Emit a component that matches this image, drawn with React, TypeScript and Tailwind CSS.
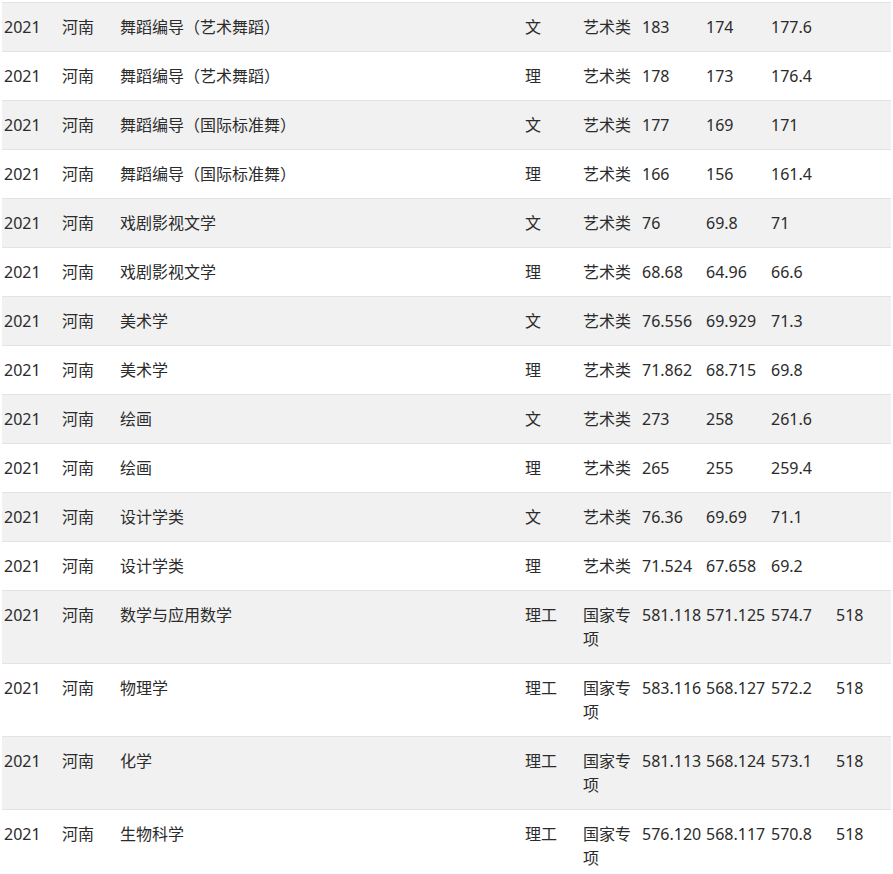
const rows: string[][] = [
  ['2021', '河南', '舞蹈编导（艺术舞蹈）', '文', '艺术类', '183', '174', '177.6', ''],
  ['2021', '河南', '舞蹈编导（艺术舞蹈）', '理', '艺术类', '178', '173', '176.4', ''],
  ['2021', '河南', '舞蹈编导（国际标准舞）', '文', '艺术类', '177', '169', '171', ''],
  ['2021', '河南', '舞蹈编导（国际标准舞）', '理', '艺术类', '166', '156', '161.4', ''],
  ['2021', '河南', '戏剧影视文学', '文', '艺术类', '76', '69.8', '71', ''],
  ['2021', '河南', '戏剧影视文学', '理', '艺术类', '68.68', '64.96', '66.6', ''],
  ['2021', '河南', '美术学', '文', '艺术类', '76.556', '69.929', '71.3', ''],
  ['2021', '河南', '美术学', '理', '艺术类', '71.862', '68.715', '69.8', ''],
  ['2021', '河南', '绘画', '文', '艺术类', '273', '258', '261.6', ''],
  ['2021', '河南', '绘画', '理', '艺术类', '265', '255', '259.4', ''],
  ['2021', '河南', '设计学类', '文', '艺术类', '76.36', '69.69', '71.1', ''],
  ['2021', '河南', '设计学类', '理', '艺术类', '71.524', '67.658', '69.2', ''],
  ['2021', '河南', '数学与应用数学', '理工', '国家专项', '581.118', '571.125', '574.7', '518'],
  ['2021', '河南', '物理学', '理工', '国家专项', '583.116', '568.127', '572.2', '518'],
  ['2021', '河南', '化学', '理工', '国家专项', '581.113', '568.124', '573.1', '518'],
  ['2021', '河南', '生物科学', '理工', '国家专项', '576.120', '568.117', '570.8', '518'],
];

const widths = ['w-[58px]', 'w-[58px]', 'w-[405px]', 'w-[58px]', 'w-[59px]', 'w-[64px]', 'w-[65px]', 'w-[65px]', 'w-[57px]'];

export default function App() {
  return (
    <div className="min-h-[874px] bg-white pt-[2px] pl-[2px]">
      <table
        className="table-fixed border-collapse text-[16px] leading-[24px] text-[#2b2b2b]"
        style={{ fontFamily: '"Noto Sans", "Noto Sans CJK SC", sans-serif' }}
      >
        <tbody>
          {rows.map((r, i) => (
            <tr
              key={i}
              className={`border-t border-[#e1e2e6] ${i % 2 === 0 ? 'bg-[#f1f1f1]' : 'bg-white'}`}
            >
              {r.map((c, j) => (
                <td key={j} className={`${widths[j]} align-top pl-[2px] pr-0 py-[12px] break-all`}>
                  {c}
                </td>
              ))}
            </tr>
          ))}
        </tbody>
      </table>
    </div>
  );
}
